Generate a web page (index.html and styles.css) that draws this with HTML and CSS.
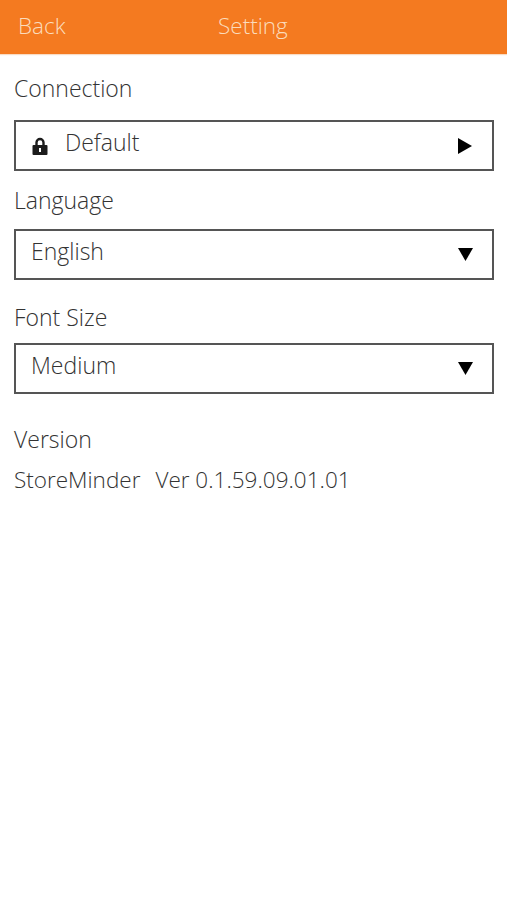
FILE: index.html
```html
<!DOCTYPE html>
<html lang="en">
<head>
    <meta charset="UTF-8">
    <meta name="viewport" content="width=device-width, initial-scale=1.0">
    <title>Setting</title>
    <link rel="stylesheet" href="styles.css">
</head>
<body>
    <header class="topbar">
        <span class="back">Back</span>
        <span class="title">Setting</span>
    </header>
    <main class="content">
        <div class="label label-connection">Connection</div>
        <div class="box box-connection">
            <svg class="lock" width="16" height="18" viewBox="0 0 16 18">
                <path d="M4.5 9V5.5a3.5 3.5 0 0 1 7 0V9" fill="none" stroke="#1c1c1c" stroke-width="2.4"/>
                <rect x="0.5" y="8" width="15" height="10" rx="1" fill="#1c1c1c"/>
                <rect x="7" y="11" width="2" height="4" fill="#fff"/>
            </svg>
            <span class="box-text">Default</span>
            <svg class="arrow" width="14" height="16" viewBox="0 0 14 16"><polygon points="0,0 14,8 0,16" fill="#000"/></svg>
        </div>
        <div class="label label-language">Language</div>
        <div class="box">
            <span class="box-text">English</span>
            <svg class="arrow" width="15" height="13" viewBox="0 0 15 13"><polygon points="0,0 15,0 7.5,13" fill="#000"/></svg>
        </div>
        <div class="label label-font">Font Size</div>
        <div class="box">
            <span class="box-text">Medium</span>
            <svg class="arrow" width="15" height="13" viewBox="0 0 15 13"><polygon points="0,0 15,0 7.5,13" fill="#000"/></svg>
        </div>
        <div class="label label-version">Version</div>
        <div class="version-text"><span class="app-name">StoreMinder</span>Ver 0.1.59.09.01.01</div>
    </main>
</body>
</html>
```

FILE: styles.css
```css
body {
    margin: 0;
    background-color: #fff;
    font-family: "Open Sans", "Noto Sans", sans-serif;
    font-weight: 300;
    color: #333;
}
.topbar {
    height: 54px;
    padding: 0 0 4px 18px;
    box-sizing: border-box;
    background-color: #f47a20;
    box-shadow: 0 1px 1px #f9dcc4;
    color: #fbdcbc;
    font-size: 22.5px;
    display: flex;
    align-items: center;
}
.back {
    width: 200px;
}
.content {
    padding: 0 13px 0 14px;
}
.label {
    font-size: 23px;
    line-height: 30px;
}
.label-connection {
    margin-top: 19px;
    margin-bottom: 17px;
}
.box {
    border: 2px solid #555;
    height: 47px;
    padding-left: 15px;
    display: flex;
    align-items: center;
    font-size: 23px;
}
.box-text {
    padding-bottom: 8px;
}
.box-connection {
    padding-left: 16px;
}
.box-connection .box-text {
    margin-left: 17px;
}
.arrow {
    margin-left: auto;
    margin-right: 19px;
}
.box-connection .arrow {
    margin-right: 20px;
}
.label-language {
    margin-top: 14px;
    margin-bottom: 14px;
}
.label-font {
    margin-top: 22px;
    margin-bottom: 11px;
}
.label-version {
    margin-top: 30px;
}
.version-text {
    font-size: 22.5px;
    line-height: 30px;
    margin-top: 11px;
}
.app-name {
    margin-right: 15px;
}
```
